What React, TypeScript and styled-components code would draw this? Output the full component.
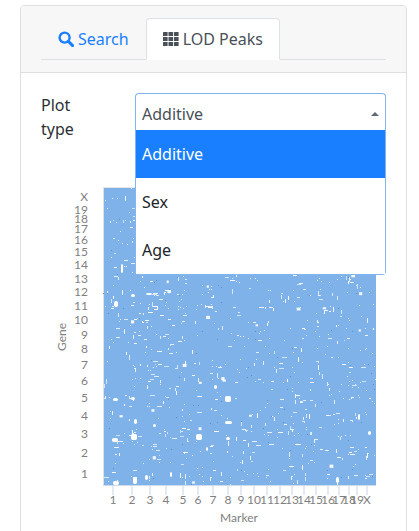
import React, { useMemo } from "react";
import styled, { createGlobalStyle } from "styled-components";

const Global = createGlobalStyle`
  html, body { margin: 0; padding: 0; background: #fff; height: 531px; overflow: hidden; }
  body { font-family: "Noto Sans", "Open Sans", sans-serif; font-size: 16px; line-height: 24px; color: #212529; }
`;
const Card = styled.div`
  margin: 5px 12px 0 20px; height: 600px; border: 1px solid #dfdfdf; border-radius: 4px; box-sizing: border-box;
`;
const Header = styled.div`
  background: #f7f7f7; border-bottom: 1px solid #dfdfdf; height: 67px; box-sizing: border-box; padding: 12px 20px 0;
  border-radius: 3px 3px 0 0;
`;
const Tabs = styled.div`
  display: flex; height: 42px; border-bottom: 1px solid #dee2e6; box-sizing: border-box;
`;
const Tab = styled.div<{ $active?: boolean }>`
  display: flex; align-items: center; gap: 4px; height: 42px; box-sizing: border-box; padding: 0 16px;
  color: ${(p) => (p.$active ? "#495057" : "#1a7fff")};
  background: ${(p) => (p.$active ? "#fff" : "transparent")};
  border: 1px solid ${(p) => (p.$active ? "#dee2e6" : "transparent")};
  border-bottom-color: ${(p) => (p.$active ? "#fff" : "transparent")};
  border-radius: 4px 4px 0 0;
`;
const Body = styled.div`
  padding: 20px 20px 0;
`;
const FormRow = styled.div`
  position: relative; display: flex; height: 44px;
`;
const Label = styled.div`
  width: 94px; flex: none; line-height: 24px; color: #2b3035;
`;
const SelectWrap = styled.div`
  position: relative; flex: 1; height: 38px;
`;
const Control = styled.div`
  display: flex; align-items: center; justify-content: space-between; height: 38px; box-sizing: border-box;
  padding: 2px 6px 0 6px; border: 1px solid #80b5f2; border-bottom: 0; border-radius: 4px 4px 0 0; color: #495057; background: #fff;
`;
const Caret = styled.span`
  width: 0; height: 0; border-left: 4px solid transparent; border-right: 4px solid transparent; border-bottom: 4px solid #5f6a75;
`;
const Menu = styled.div`
  position: absolute; z-index: 2; left: 0; right: 0; top: 37px; background: #fff;
  border: 1px solid #80b5f2; border-top: 0; border-radius: 0 0 4px 4px;
`;
const Option = styled.div<{ $selected?: boolean }>`
  display: flex; align-items: center; height: 48px; padding-left: 6px;
  color: ${(p) => (p.$selected ? "#fff" : "#212529")}; background: ${(p) => (p.$selected ? "#1a7fff" : "#fff")};
`;
const ChartBox = styled.div`
  margin-left: -20px; height: 394px;
`;
const ChartSvg = styled.svg`
  display: block; width: 386px; height: 394px;
  text { font-family: "Lato", "Noto Sans", sans-serif; fill: #7f7f7f; }
`;

const yTicks: [string, number][] = [["X",197],["19",210],["18",219],["17",229],["16",240],["15",252],["14",265],["13",279],["12",292],["11",306],["10",320],["9",335],["8",349],["7",365],["6",381],["5",398],["4",416],["3",434],["2",453],["1",474]];
const xTicks: [string, number][] = [["1",113],["2",132],["3",150],["4",166],["5",183],["6",198],["7",213],["8",228],["9",241],["10",254],["11",267],["12",280],["13",292],["14",304],["15",316],["16",328],["17",339],["18",349],["19",357],["X",367]];

const blobs: number[][] = [[112,438,6,4],[131,434,6,6],[196,434,6,6],[113,481,6,4],[133,477,4,7],[145,475,3,5],[113,398,5,3],[131,397,4,3],[153,424,3,3],[134,419,3,5],[225,396,6,6],[225,421,7,3],[226,437,4,3],[114,301,4,6],[131,294,4,3],[146,293,6,2],[214,385,3,4],[358,414,2,6],[300,401,3,2],[368,431,3,4],[336,477,3,6],[170,472,2,5],[206,447,2,4],[121,264,2,9]];

function speckles() {
  let s = 123457;
  const r = () => { s = (s * 16807) % 2147483647; return s / 2147483647; };
  const whites: number[][] = [];
  const darks: number[][] = [];
  for (let i = 0; i < 1000; i++) {
    const row = yTicks[Math.floor(r() * yTicks.length)][1];
    const col = xTicks[Math.floor(r() * xTicks.length)][1];
    const mode = r();
    const x = mode < 0.3 ? col + (r() - 0.5) * 6 : 103 + r() * 272;
    const y = mode > 0.7 ? row + (r() - 0.5) * 6 : 187 + r() * 297;
    const k = r();
    const o = 0.6 + r() * 0.4;
    if (k < 0.5) whites.push([Math.round(x), Math.round(y), 1, 1, o]);
    else if (k < 0.75) whites.push([Math.round(x), Math.round(y), 2 + Math.round(r() * 3), 1, o]);
    else if (k < 0.97) whites.push([Math.round(x), Math.round(y), 1, 2 + Math.round(r() * 3), o]);
    else whites.push([x, y, 2 + r() * 2, 2 + r() * 1.5, 0.9]);
  }
  for (let i = 0; i < 90; i++) darks.push([Math.round(103 + r() * 272), Math.round(187 + r() * 297)]);
  return { whites, darks };
}

function Plot() {
  const { whites, darks } = useMemo(speckles, []);
  return (
    <ChartSvg viewBox="21 137 386 394">
      <rect x={103} y={187} width={273} height={298} fill="#7eb2e8" />
      <rect x={103} y={187} width={273} height={1} fill="#e4e6e8" />
      <rect x={103} y={187} width={1} height={298} fill="#dfe3e8" />
      <g fill="#fff">
        {whites.map((b, i) => <rect key={i} x={b[0]} y={b[1]} width={b[2]} height={b[3]} opacity={b[4]} />)}
        {blobs.map((b, i) => <rect key={i} x={b[0]} y={b[1]} width={b[2]} height={b[3]} rx={1.8} />)}
      </g>
      <g fill="#5c8fc6">
        {darks.map((b, i) => <rect key={i} x={b[0]} y={b[1]} width={1} height={1} />)}
      </g>
      <rect x={103} y={485} width={273} height={1} fill="#cfdcec" />
      <g fill="#c9d6e8">
        {xTicks.map(([t, x]) => <rect key={t} x={x - 0.5} y={485} width={1} height={10} />)}
      </g>
      <g fontSize={12} textAnchor="middle">
        {xTicks.map(([t, x]) => <text key={t} x={x} y={504}>{t}</text>)}
      </g>
      <g fontSize={12} textAnchor="end">
        {yTicks.map(([t, y]) => <text key={t} x={88} y={y + 4}>{t}</text>)}
      </g>
      <text x={239} y={522} fontSize={12} textAnchor="middle">Marker</text>
      <text transform="translate(66 337) rotate(-90)" fontSize={12} textAnchor="middle">Gene</text>
    </ChartSvg>
  );
}

const SearchIcon = () => (
  <svg width="16" height="16" viewBox="0 0 16 16" fill="none" stroke="#1a7fff">
    <circle cx="6.6" cy="6.6" r="5" strokeWidth="2.4" />
    <path d="M10.4 10.4 14.6 14.6" strokeWidth="3" strokeLinecap="round" />
  </svg>
);
const GridIcon = () => (
  <svg width="16" height="14" viewBox="0 0 16 14" fill="#495057">
    {[0, 5, 10].flatMap((y) => [0, 5.5, 11].map((x) => <rect key={`${x}-${y}`} x={x} y={y} width="4.6" height="4" rx="0.5" />))}
  </svg>
);

export default function App() {
  return (
    <>
      <Global />
      <Card>
        <Header>
          <Tabs>
            <Tab><SearchIcon />Search</Tab>
            <Tab $active><GridIcon />LOD Peaks</Tab>
          </Tabs>
        </Header>
        <Body>
          <FormRow>
            <Label>Plot<br />type</Label>
            <SelectWrap>
              <Control>Additive<Caret /></Control>
              <Menu>
                <Option $selected>Additive</Option>
                <Option>Sex</Option>
                <Option>Age</Option>
              </Menu>
            </SelectWrap>
          </FormRow>
          <ChartBox><Plot /></ChartBox>
        </Body>
      </Card>
    </>
  );
}
